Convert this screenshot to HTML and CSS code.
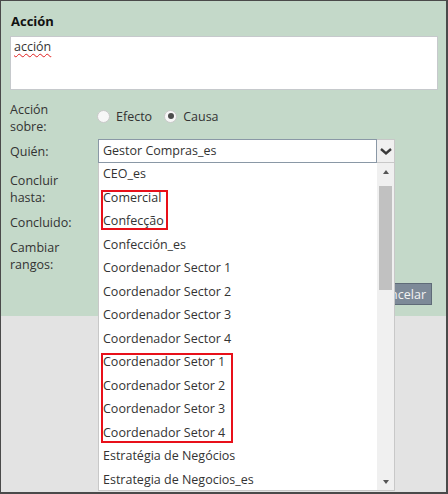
FILE: index.html
```html
<!DOCTYPE html>
<html lang="es">
<head>
    <meta charset="UTF-8">
    <meta name="viewport" content="width=device-width, initial-scale=1.0">
    <title>Acción</title>
    <link rel="stylesheet" href="styles.css">
</head>
<body>
<div class="frame">
    <div class="panel">
        <h2 class="title">Acción</h2>
        <div class="memo"><span class="misspelled">acción</span></div>

        <!-- Acción sobre -->
        <div class="form-row">
            <label class="form-label">Acción<br>sobre:</label>
            <div class="radio-group">
                <span class="radio"></span><span class="radio-text">Efecto</span>
                <span class="radio checked"></span><span class="radio-text">Causa</span>
            </div>
        </div>

        <!-- Quién + lista abierta -->
        <div class="form-row row-combo">
            <label class="form-label">Quién:</label>
            <div class="combo">
                <div class="combo-input">Gestor Compras_es</div>
                <div class="combo-button">
                    <svg width="12" height="7" viewBox="0 0 12 7"><path d="M1 1 L6 5.4 L11 1" fill="none" stroke="#3a3a3a" stroke-width="2.4"/></svg>
                </div>
                <div class="combo-list">
                    <div class="combo-items">
                        <div class="combo-item">CEO_es</div>
                        <div class="combo-item">Comercial</div>
                        <div class="combo-item">Confecção</div>
                        <div class="combo-item">Confección_es</div>
                        <div class="combo-item">Coordenador Sector 1</div>
                        <div class="combo-item">Coordenador Sector 2</div>
                        <div class="combo-item">Coordenador Sector 3</div>
                        <div class="combo-item">Coordenador Sector 4</div>
                        <div class="combo-item">Coordenador Setor 1</div>
                        <div class="combo-item">Coordenador Setor 2</div>
                        <div class="combo-item">Coordenador Setor 3</div>
                        <div class="combo-item">Coordenador Setor 4</div>
                        <div class="combo-item">Estratégia de Negócios</div>
                        <div class="combo-item">Estrategia de Negocios_es</div>
                    </div>
                    <div class="scrollbar">
                        <div class="scroll-arrow"><span class="tri-up"></span></div>
                        <div class="scroll-track"><div class="scroll-thumb"></div></div>
                        <div class="scroll-arrow"><span class="tri-down"></span></div>
                    </div>
                    <div class="mark mark-one"></div>
                    <div class="mark mark-two"></div>
                </div>
            </div>
        </div>

        <div class="form-row row-gap">
            <label class="form-label">Concluir<br>hasta:</label>
        </div>
        <div class="form-row row-gap-sm">
            <label class="form-label">Concluido:</label>
        </div>
        <div class="form-row row-gap-sm">
            <label class="form-label">Cambiar<br>rangos:</label>
        </div>

        <div class="actions">
            <button class="btn">Aceptar</button>
            <button class="btn">Cancelar</button>
        </div>
    </div>
</div>
</body>
</html>
```

FILE: styles.css
```css
body {
    margin: 0;
    font-family: "Open Sans", "Liberation Sans", sans-serif;
    font-size: 12.5px;
    color: #333;
}

.frame {
    width: 448px;
    height: 494px;
    box-sizing: border-box;
    border-style: solid;
    border-color: #4a4a4a;
    border-width: 1px 2px 2px 1px;
    background-color: #e3e3e3;
    overflow: hidden;
}

.panel {
    background-color: #c4d9c9;
    padding: 11px 8px 11px 9px;
}

.title {
    margin: 0;
    font-size: 13px;
    font-weight: bold;
    line-height: 18px;
    color: #111;
    padding-left: 1px;
}

.memo {
    margin-top: 6px;
    height: 54px;
    box-sizing: border-box;
    background: #fff;
    border: 1px solid #c6c9cc;
    padding: 1px 3px;
    line-height: 17px;
}

.misspelled {
    text-decoration: underline wavy #e02020;
    text-decoration-thickness: 1px;
    text-underline-offset: 2px;
}

.form-row {
    display: flex;
    align-items: center;
    margin-top: 11px;
}

.form-label {
    width: 88px;
    flex: none;
    line-height: 17px;
    color: #333;
}

.radio-group {
    display: flex;
    align-items: center;
    height: 30px;
    align-self: flex-start;
    margin-left: -1px;
}

.radio {
    width: 13px;
    height: 13px;
    box-sizing: border-box;
    border: 1px solid #c9c9c9;
    border-radius: 50%;
    background: #f7f7f7;
    display: flex;
    align-items: center;
    justify-content: center;
}

.radio.checked::after {
    content: "";
    width: 6px;
    height: 6px;
    border-radius: 50%;
    background: #4d4d4d;
}

.radio-text {
    margin: 0 12px 0 6px;
}

.row-combo {
    margin-top: 4px;
}

.combo {
    position: relative;
    display: flex;
    height: 24px;
}

.combo-input {
    width: 279px;
    box-sizing: border-box;
    border: 1px solid #8a98a6;
    background: #fff;
    padding: 0 4px;
    line-height: 22px;
}

.combo-button {
    width: 18px;
    box-sizing: border-box;
    border: 1px solid #c8c8c8;
    border-left: none;
    background: #f0f0f0;
    display: flex;
    align-items: center;
    justify-content: center;
}

.combo-list {
    position: absolute;
    top: 24px;
    left: 0;
    width: 297px;
    height: 328px;
    box-sizing: border-box;
    border: 1px solid #c8c8c8;
    border-top: none;
    background: #fff;
    display: flex;
    z-index: 10;
}

.combo-items {
    flex: 1;
    overflow: hidden;
    margin-top: -1px;
}

.combo-item {
    padding-left: 4px;
    line-height: 23.5px;
    white-space: nowrap;
}

.scrollbar {
    width: 17px;
    background: #f0f0f0;
    display: flex;
    flex-direction: column;
}

.scroll-arrow {
    height: 17px;
    display: flex;
    align-items: center;
    justify-content: center;
}

.tri-up {
    border-left: 3.5px solid transparent;
    border-right: 3.5px solid transparent;
    border-bottom: 4px solid #555;
}

.tri-down {
    border-left: 3.5px solid transparent;
    border-right: 3.5px solid transparent;
    border-top: 4px solid #555;
}

.scroll-track {
    flex: 1;
    padding: 6px 2px 0 2px;
}

.scroll-thumb {
    height: 104px;
    background: #c1c1c1;
}

.mark {
    position: absolute;
    left: 2px;
    box-sizing: border-box;
    border: 2px solid #e8101a;
}

.mark-one {
    top: 27px;
    width: 67px;
    height: 40px;
}

.mark-two {
    top: 190px;
    width: 132px;
    height: 90px;
}

.row-gap {
    margin-top: 9px;
}

.row-gap-sm {
    margin-top: 8px;
}

.actions {
    display: flex;
    justify-content: flex-end;
    gap: 6px;
    margin-top: 10px;
    padding-right: 6px;
}

.btn {
    height: 22px;
    padding: 0 5px 0 8px;
    font-family: inherit;
    font-size: 12.5px;
    color: #f2f2f2;
    background-color: #7d8a98;
    border: 1px solid #5f6b78;
    border-radius: 0;
}
```
